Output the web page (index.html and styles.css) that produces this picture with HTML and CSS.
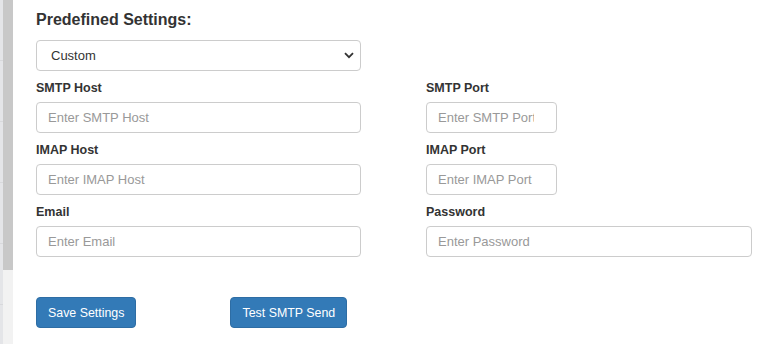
FILE: index.html
```html
<!DOCTYPE html>
<html>
<head>
<meta charset="utf-8">
<link rel="stylesheet" href="styles.css">
</head>
<body>
<div class="page">
  <div class="strip">
    <div class="strip-edge"></div>
    <div class="strip-track"><div class="strip-thumb"></div></div>
  </div>
  <div class="content">
    <h3 class="heading">Predefined Settings:</h3>
    <div class="select-wrap">
      <select class="select">
        <option>Custom</option>
      </select>
      <svg class="chevron" width="10" height="7" viewBox="0 0 10 7"><path d="M1 1.2 L5 5.2 L9 1.2" fill="none" stroke="#333" stroke-width="1.8"/></svg>
    </div>
    <div class="grid">
      <div class="field">
        <label class="label">SMTP Host</label>
        <input class="input" placeholder="Enter SMTP Host">
      </div>
      <div class="field">
        <label class="label">SMTP Port</label>
        <input class="input short" placeholder="Enter SMTP Port">
      </div>
      <div class="field">
        <label class="label">IMAP Host</label>
        <input class="input" placeholder="Enter IMAP Host">
      </div>
      <div class="field">
        <label class="label">IMAP Port</label>
        <input class="input short" placeholder="Enter IMAP Port">
      </div>
      <div class="field">
        <label class="label">Email</label>
        <input class="input" placeholder="Enter Email">
      </div>
      <div class="field">
        <label class="label">Password</label>
        <input class="input" type="password" placeholder="Enter Password">
      </div>
    </div>
    <div class="actions">
      <button class="btn">Save Settings</button>
      <button class="btn">Test SMTP Send</button>
    </div>
  </div>
</div>
</body>
</html>
```
FILE: styles.css
```css
html, body {
  margin: 0;
  padding: 0;
  background: #fff;
}
body {
  font-family: "Liberation Sans", Arial, sans-serif;
  color: #333;
}
.page {
  display: flex;
  height: 344px;
  overflow: hidden;
}
.strip {
  display: flex;
  width: 13px;
  flex: none;
}
.strip-edge {
  width: 3px;
  background: repeating-linear-gradient(to bottom, #e4e5e8 0, #e4e5e8 60px, #d8d9dc 60px, #d8d9dc 61px);
}
.strip-track {
  width: 10px;
  background: #f2f2f2;
}
.strip-thumb {
  height: 270px;
  background: #c8c8c8;
}
.content {
  padding: 10px 0 0 23px;
  flex: 1;
}
.heading {
  margin: 0 0 10px 0;
  font-size: 16px;
  line-height: 20px;
  font-weight: bold;
  color: #333;
}
.select-wrap {
  position: relative;
  width: 325px;
  height: 31px;
}
.select {
  appearance: none;
  -webkit-appearance: none;
  box-sizing: border-box;
  width: 325px;
  height: 31px;
  border: 1px solid #ccc;
  border-radius: 4px;
  background: #fff;
  font-family: "Liberation Sans", Arial, sans-serif;
  font-size: 13px;
  color: #333;
  padding: 0 0 0 14px;
  margin: 0;
}
.chevron {
  position: absolute;
  right: 7px;
  top: 12px;
}
.grid {
  display: grid;
  grid-template-columns: 325px 326px;
  column-gap: 65px;
  margin-top: 10px;
}
.field {
  display: flex;
  flex-direction: column;
  align-items: flex-start;
  margin-bottom: 10px;
}
.label {
  font-size: 12.5px;
  line-height: 15px;
  font-weight: bold;
  color: #333;
  margin-bottom: 6px;
}
.input {
  box-sizing: border-box;
  width: 100%;
  height: 31px;
  border: 1px solid #ccc;
  border-radius: 4px;
  padding: 0 11px;
  font-family: "Liberation Sans", Arial, sans-serif;
  font-size: 13px;
  color: #555;
  margin: 0;
  outline: none;
}
.input::placeholder {
  color: #999;
}
.input.short {
  width: 131px;
  padding-right: 22px;
}
.actions {
  display: flex;
  gap: 94px;
  margin-top: 30px;
}
.btn {
  box-sizing: border-box;
  height: 31px;
  padding: 0 11px;
  background: #337ab7;
  border: 1px solid #2e6da4;
  border-radius: 4px;
  color: #fff;
  font-family: "Liberation Sans", Arial, sans-serif;
  font-size: 12.4px;
  margin: 0;
}
```
